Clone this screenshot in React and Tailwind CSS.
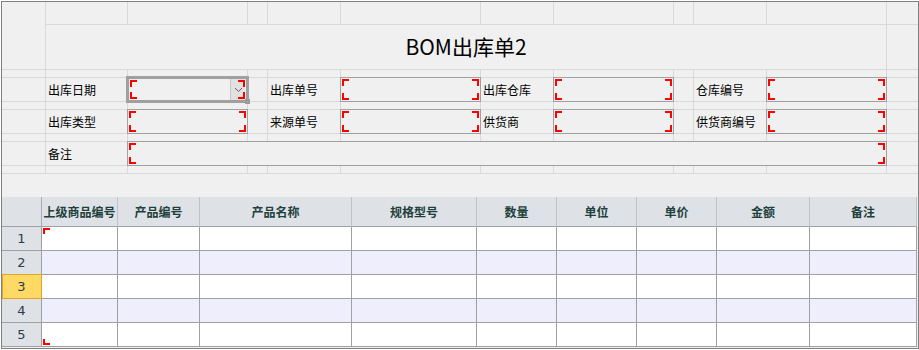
import React from 'react';

const font = { fontFamily: '"Noto Sans CJK SC", "Noto Sans", sans-serif' };

function Corners() {
  return (
    <>
      <span className="absolute top-px left-px w-[7px] h-[7px] border-t-2 border-l-2 border-[#ff0000]" />
      <span className="absolute bottom-px left-px w-[7px] h-[7px] border-b-2 border-l-2 border-[#ff0000]" />
      <span className="absolute top-px right-px w-[7px] h-[7px] border-t-2 border-r-2 border-[#ff0000] z-10" />
      <span className="absolute bottom-px right-px w-[7px] h-[7px] border-b-2 border-r-2 border-[#ff0000] z-10" />
    </>
  );
}

function Cell({ className = '' }) {
  return <div className={'bg-[#f0f0f0] ' + className} />;
}

function Label({ children }) {
  return (
    <div className="bg-[#f0f0f0] flex items-center pl-[2px] text-[12px] text-black whitespace-nowrap">
      {children}
    </div>
  );
}

function Input({ className = '' }) {
  return (
    <div className={'bg-[#f0f0f0] -m-px border border-[#a0a0a0] relative z-10 ' + className}>
      <Corners />
    </div>
  );
}

function DateInput() {
  return (
    <div className="bg-[#f0f0f0] -m-[2px] border-[3px] border-[#a0a0a0] relative z-20">
      <Corners />
      <div className="absolute top-0 bottom-0 right-px w-[15px] bg-[#e1e1e1] border-l border-[#c8c8c8] flex items-center justify-center">
        <svg width="9" height="6" viewBox="0 0 9 6">
          <path d="M1 1 L4.5 4.5 L8 1" fill="none" stroke="#606060" strokeWidth="1" />
        </svg>
      </div>
      <span className="absolute -right-[4px] -bottom-[4px] w-[5px] h-[5px] bg-[#9c9c9c]" />
    </div>
  );
}

function Spacer() {
  return Array.from({ length: 12 }).map((_, i) => <Cell key={i} />);
}

const headers = ['上级商品编号', '产品编号', '产品名称', '规格型号', '数量', '单位', '单价', '金额', '备注'];

export default function App() {
  return (
    <div className="w-[919px] h-[350px] bg-white" style={font}>
      <div className="ml-px mt-px w-[918px] h-[348px] border border-[#808080] bg-[#f0f0f0] flex flex-col overflow-hidden">
        <div className="grid gap-px bg-[#d9d9d9] pb-px grid-cols-[43px_81px_119px_19px_72px_139px_72px_119px_19px_72px_119px_31px] grid-rows-[22px_44px_7px_23px_7px_23px_7px_23px_7px]">
          {/* top row */}
          <Cell className="row-span-2" />
          {Array.from({ length: 11 }).map((_, i) => <Cell key={'t' + i} />)}
          {/* title */}
          <div className="col-span-10 bg-[#f0f0f0] flex items-center justify-center text-[21px] text-black">
            BOM出库单2
          </div>
          <Cell />
          <Spacer />
          {/* form row 1 */}
          <Cell />
          <Label>出库日期</Label>
          <DateInput />
          <Cell />
          <Label>出库单号</Label>
          <Input />
          <Label>出库仓库</Label>
          <Input />
          <Cell />
          <Label>仓库编号</Label>
          <Input />
          <Cell />
          <Spacer />
          {/* form row 2 */}
          <Cell />
          <Label>出库类型</Label>
          <Input />
          <Cell />
          <Label>来源单号</Label>
          <Input />
          <Label>供货商</Label>
          <Input />
          <Cell />
          <Label>供货商编号</Label>
          <Input />
          <Cell />
          <Spacer />
          {/* form row 3 */}
          <Cell />
          <Label>备注</Label>
          <Input className="col-span-9" />
          <Cell />
          <Spacer />
        </div>

        <div className="h-[23px] shrink-0" />

        <div className="w-[915px] grid grid-cols-[40px_76px_82px_152px_125px_80px_80px_80px_93px_107px]">
          <div className="h-[30px] bg-[#dee2e7] border-r border-b border-r-[#a8acb0] border-b-[#a0a0a0]" />
          {headers.map((h) => (
            <div
              key={h}
              className="h-[30px] bg-[#dee2e7] border-r border-b border-r-[#bfc3c7] border-b-[#a0a0a0] flex items-center justify-center text-[12px] font-bold text-[#21403b] whitespace-nowrap"
            >
              {h}
            </div>
          ))}
          {[1, 2, 3, 4, 5].map((n) => {
            const rowBg = n % 2 === 0 ? 'bg-[#eeeefd]' : 'bg-white';
            return (
              <React.Fragment key={n}>
                <div
                  className={
                    'h-[24px] border-r border-b border-[#a0a0a0] flex items-center justify-center text-[13px] text-[#2d3b48] relative ' +
                    (n === 3 ? 'bg-[#ffd966]' : 'bg-[#dee2e7]')
                  }
                  style={{ fontFamily: '"DejaVu Sans", sans-serif' }}
                >
                  {n === 3 && <span className="absolute -top-px left-0 -right-px -bottom-px border border-[#e2a521]" />}
                  <span className="relative">{n}</span>
                </div>
                {headers.map((h, i) => (
                  <div key={h} className={'h-[24px] border-r border-b border-[#a0a0a0] relative ' + rowBg}>
                    {i === 0 && n === 1 && (
                      <span className="absolute top-[1px] left-px w-[7px] h-[6px] border-t-2 border-l-2 border-[#ff0000]" />
                    )}
                    {i === 0 && n === 5 && (
                      <span className="absolute bottom-[1px] left-px w-[7px] h-[6px] border-b-2 border-l-2 border-[#ff0000]" />
                    )}
                  </div>
                ))}
              </React.Fragment>
            );
          })}
        </div>
      </div>
    </div>
  );
}
